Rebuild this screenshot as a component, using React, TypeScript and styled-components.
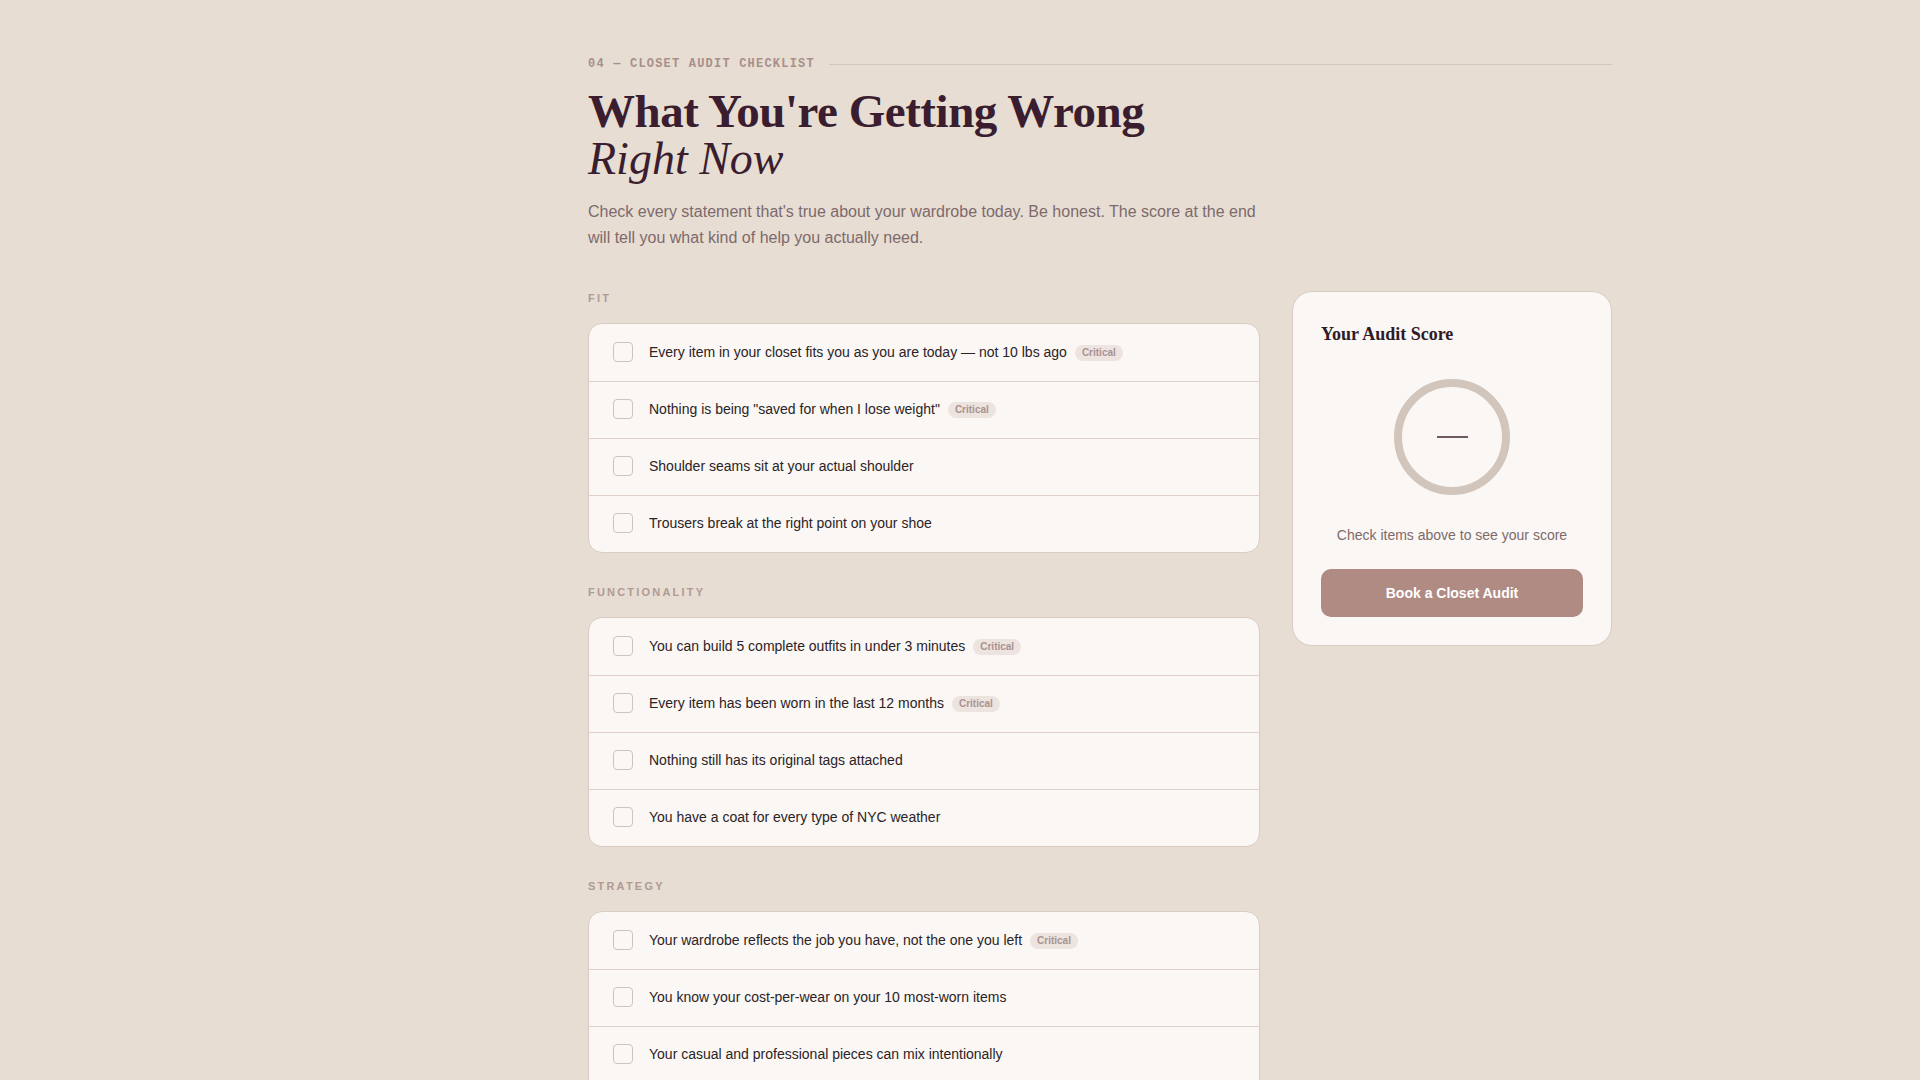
import * as React from 'react'
import styled, { createGlobalStyle } from 'styled-components'

const GlobalStyle = createGlobalStyle`
  html, body {
    margin: 0;
    padding: 0;
    background: #e7ddd3;
  }
  * {
    box-sizing: border-box;
  }
`

const Page = styled.div`
  min-height: 100vh;
  background: #e7ddd3;
  padding: 56px 0 80px 588px;
  font-family: 'Liberation Sans', Arial, sans-serif;
`

const Container = styled.div`
  width: 1024px;
`

const Eyebrow = styled.div`
  display: flex;
  align-items: center;
  gap: 14px;
  margin-bottom: 15px;
`

const EyebrowText = styled.span`
  font-family: 'Liberation Mono', 'Courier New', monospace;
  font-size: 12px;
  line-height: 16px;
  font-weight: 700;
  letter-spacing: 0.1em;
  color: #a98f89;
  white-space: nowrap;
`

const EyebrowLine = styled.div`
  flex: 1;
  height: 1px;
  background: #d3c6bc;
`

const Title = styled.h1`
  margin: 0;
  font-family: 'Liberation Serif', 'Times New Roman', serif;
  font-size: 47px;
  line-height: 48px;
  font-weight: 700;
  letter-spacing: -0.01em;
  color: #3a1d2e;

  em {
    display: block;
    font-size: 46px;
    font-weight: 400;
    font-style: italic;
    letter-spacing: 0;
  }
`

const Lead = styled.p`
  margin: 16px 0 0;
  max-width: 680px;
  font-size: 16px;
  line-height: 26px;
  color: #7d6a6c;
`

const Grid = styled.div`
  display: grid;
  grid-template-columns: 1fr 320px;
  gap: 32px;
  margin-top: 40px;
  align-items: start;
`

const Sections = styled.div`
  display: flex;
  flex-direction: column;
  gap: 32px;
`

const SectionLabel = styled.div`
  font-size: 11px;
  line-height: 14px;
  font-weight: 700;
  letter-spacing: 0.2em;
  color: #b09a94;
  margin-bottom: 18px;
`

const Card = styled.div`
  background: #faf7f4;
  border: 1px solid #d9ccc4;
  border-radius: 14px;
  overflow: hidden;
`

const Row = styled.label`
  display: flex;
  align-items: center;
  gap: 16px;
  height: 57px;
  padding: 0 24px 2px;
  cursor: pointer;

  & + & {
    border-top: 1px solid #dcd0c8;
  }
`

const Box = styled.span<{ $checked: boolean }>`
  flex: none;
  width: 20px;
  height: 20px;
  border-radius: 4px;
  border: 1.5px solid ${p => (p.$checked ? '#b08b84' : '#cfc3bd')};
  background: ${p => (p.$checked ? '#b08b84' : '#faf7f4')};
  display: flex;
  align-items: center;
  justify-content: center;
`

const ItemText = styled.span`
  font-size: 14px;
  line-height: 20px;
  color: #2b2326;
`

const Badge = styled.span`
  display: inline-block;
  margin-left: 8px;
  padding: 1px 7px;
  border-radius: 10px;
  background: #ede3df;
  color: #a99291;
  font-size: 10px;
  line-height: 14px;
  font-weight: 700;
  vertical-align: 1px;
`

const Panel = styled.aside`
  position: sticky;
  top: 24px;
  background: #faf7f4;
  border: 1px solid #d9ccc4;
  border-radius: 20px;
  padding: 28px;
  display: flex;
  flex-direction: column;
`

const PanelTitle = styled.h3`
  margin: 0;
  font-family: 'Liberation Serif', 'Times New Roman', serif;
  font-size: 18px;
  line-height: 28px;
  font-weight: 700;
  color: #2e1b26;
`

const Ring = styled.div`
  position: relative;
  align-self: center;
  width: 116px;
  height: 116px;
  margin-top: 31px;
`

const RingValue = styled.div`
  position: absolute;
  inset: 0;
  display: flex;
  align-items: center;
  justify-content: center;
  font-family: 'Liberation Serif', 'Times New Roman', serif;
  font-size: 28px;
  color: #6b5a5e;
`

const Dash = styled.span`
  display: block;
  width: 31px;
  height: 2px;
  background: #6b5a5e;
`

const Hint = styled.p`
  margin: 30px 0 0;
  text-align: center;
  font-size: 14px;
  line-height: 20px;
  color: #7d6a6c;
`

const BookButton = styled.button`
  margin-top: 24px;
  height: 48px;
  border: none;
  border-radius: 10px;
  background: #b08b84;
  color: #fff;
  font-family: 'Liberation Sans', Arial, sans-serif;
  font-size: 14px;
  font-weight: 700;
  cursor: pointer;
`

type Item = { text: string; critical?: boolean }

const sections: { label: string; items: Item[] }[] = [
  {
    label: 'FIT',
    items: [
      { text: 'Every item in your closet fits you as you are today — not 10 lbs ago', critical: true },
      { text: 'Nothing is being "saved for when I lose weight"', critical: true },
      { text: 'Shoulder seams sit at your actual shoulder' },
      { text: 'Trousers break at the right point on your shoe' },
    ],
  },
  {
    label: 'FUNCTIONALITY',
    items: [
      { text: 'You can build 5 complete outfits in under 3 minutes', critical: true },
      { text: 'Every item has been worn in the last 12 months', critical: true },
      { text: 'Nothing still has its original tags attached' },
      { text: 'You have a coat for every type of NYC weather' },
    ],
  },
  {
    label: 'STRATEGY',
    items: [
      { text: 'Your wardrobe reflects the job you have, not the one you left', critical: true },
      { text: 'You know your cost-per-wear on your 10 most-worn items' },
      { text: 'Your casual and professional pieces can mix intentionally' },
      { text: 'You shop with a list, not on impulse' },
    ],
  },
]

const total = sections.reduce((n, s) => n + s.items.length, 0)

export default function App() {
  const [checked, setChecked] = React.useState<Record<string, boolean>>({})
  const count = Object.values(checked).filter(Boolean).length
  const pct = Math.round((count / total) * 100)
  const r = 54
  const circ = 2 * Math.PI * r

  return (
    <>
      <GlobalStyle />
      <Page>
        <Container>
          <Eyebrow>
            <EyebrowText>04 — CLOSET AUDIT CHECKLIST</EyebrowText>
            <EyebrowLine />
          </Eyebrow>
          <Title>
            What You're Getting Wrong
            <em>Right Now</em>
          </Title>
          <Lead>
            Check every statement that's true about your wardrobe today. Be honest. The score at the end
            will tell you what kind of help you actually need.
          </Lead>

          <Grid>
            <Sections>
              {sections.map(section => (
                <div key={section.label}>
                  <SectionLabel>{section.label}</SectionLabel>
                  <Card>
                    {section.items.map(item => {
                      const on = !!checked[item.text]
                      return (
                        <Row
                          key={item.text}
                          onClick={() => setChecked(c => ({ ...c, [item.text]: !c[item.text] }))}
                        >
                          <Box $checked={on}>
                            {on && (
                              <svg width="12" height="12" viewBox="0 0 12 12" fill="none">
                                <path d="M2.5 6.2l2.3 2.3L9.5 3.5" stroke="#fff" strokeWidth="1.8" strokeLinecap="round" strokeLinejoin="round" />
                              </svg>
                            )}
                          </Box>
                          <ItemText>
                            {item.text}
                            {item.critical && <Badge>Critical</Badge>}
                          </ItemText>
                        </Row>
                      )
                    })}
                  </Card>
                </div>
              ))}
            </Sections>

            <Panel>
              <PanelTitle>Your Audit Score</PanelTitle>
              <Ring>
                <svg width="116" height="116" viewBox="0 0 116 116">
                  <circle cx="58" cy="58" r={r} fill="none" stroke="#d2c5bc" strokeWidth="8" />
                  {count > 0 && (
                    <circle
                      cx="58"
                      cy="58"
                      r={r}
                      fill="none"
                      stroke="#b08b84"
                      strokeWidth="8"
                      strokeDasharray={circ}
                      strokeDashoffset={circ * (1 - count / total)}
                      transform="rotate(-90 58 58)"
                    />
                  )}
                </svg>
                <RingValue>{count > 0 ? `${pct}%` : <Dash />}</RingValue>
              </Ring>
              <Hint>{count > 0 ? `${count} of ${total} items checked` : 'Check items above to see your score'}</Hint>
              <BookButton>Book a Closet Audit</BookButton>
            </Panel>
          </Grid>
        </Container>
      </Page>
    </>
  )
}
